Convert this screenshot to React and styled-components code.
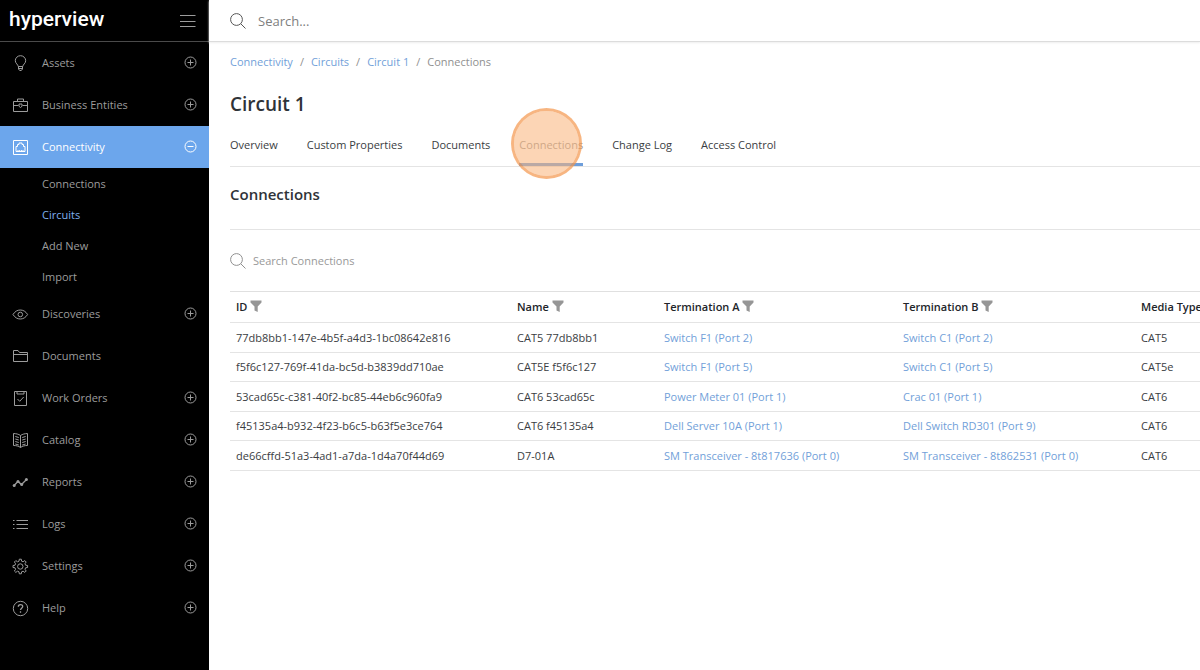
import React, { useState } from 'react';
import styled, { createGlobalStyle } from 'styled-components';

const GlobalStyle = createGlobalStyle`
  * {
    box-sizing: border-box;
  }
  body {
    margin: 0;
    background: #fff;
    color: #3a3d42;
    font-family: "Open Sans", "Noto Sans", sans-serif;
    font-size: 11px;
    line-height: 18px;
  }
  button, input {
    font: inherit;
    color: inherit;
    background: none;
    border: 0;
    padding: 0;
  }
  a {
    color: #729fd9;
    text-decoration: none;
  }
`;

const Layout = styled.div`
  display: grid;
  grid-template-columns: 209px minmax(0, 1fr);
  min-height: 100vh;
`;

const Sidebar = styled.aside`
  background: #000;
  color: #9c9c9c;
`;

const Brand = styled.div`
  display: flex;
  align-items: center;
  justify-content: space-between;
  height: 42px;
  padding: 0 13px 0 9px;
  border-bottom: 1px solid #4a4a4a;
`;

const Logo = styled.a`
  color: #fff;
  font-family: Roboto, sans-serif;
  font-size: 21px;
  font-weight: 500;
  line-height: 24px;
  padding-bottom: 3px;
`;

const IconButton = styled.button`
  display: flex;
  cursor: pointer;
`;

const Icon = styled.svg`
  display: block;
  flex: none;
  width: ${({ $size }) => $size || 16}px;
  height: ${({ $size }) => $size || 16}px;
  fill: none;
  stroke: currentColor;
  stroke-width: 1;
`;

const NavItem = styled.button`
  display: flex;
  align-items: center;
  width: 100%;
  height: 42px;
  padding: 0 12px;
  text-align: left;
  cursor: pointer;
  color: ${({ $active }) => ($active ? '#fff' : '#9c9c9c')};
  background: ${({ $active }) => ($active ? '#6ca6ec' : 'transparent')};
`;

const NavLabel = styled.span`
  flex: 1;
  padding-left: 13px;
`;

const SubNav = styled.nav`
  display: flex;
  flex-direction: column;
  padding-bottom: 1px;
`;

const SubLink = styled.a`
  padding-left: 42px;
  line-height: 31px;
  color: ${({ $active }) => ($active ? '#7fb0f0' : '#9c9c9c')};
`;

const TopBar = styled.header`
  display: flex;
  align-items: center;
  height: 42px;
  padding: 0 21px;
  gap: 12px;
  color: #555;
  border-bottom: 1px solid #dcdcdc;
  box-shadow: 0 1px 2px #eee;
`;

const SearchInput = styled.input`
  flex: 1;
  outline: none;
  font-size: ${({ $large }) => ($large ? 13 : 11)}px;
  &::placeholder {
    color: ${({ $large }) => ($large ? '#808080' : '#999')};
    opacity: 1;
  }
`;

const Content = styled.main`
  padding: 11px 0 0 21px;
  overflow: hidden;
`;

const Crumbs = styled.nav`
  display: flex;
  gap: 7px;
  color: #909090;
`;

const Title = styled.h1`
  margin: 18px 0 0;
  font-size: 19px;
  font-weight: 600;
  line-height: 30px;
  color: #2f3338;
`;

const Tabs = styled.div`
  display: flex;
  gap: 29px;
  margin-top: 15px;
  border-bottom: 1px solid #e4e4e4;
`;

const Tab = styled.button`
  position: relative;
  height: 32px;
  padding-bottom: 8px;
  cursor: pointer;
  color: ${({ $active }) => ($active ? '#999' : '#3a3d42')};
  border-bottom: 3px solid ${({ $active }) => ($active ? '#6e9edb' : 'transparent')};
`;

const ClickMarker = styled.span`
  position: absolute;
  top: 50%;
  left: 50%;
  width: 71px;
  height: 71px;
  margin: -41px 0 0 -40px;
  border-radius: 50%;
  border: 3px solid rgba(244, 150, 76, 0.7);
  background: rgba(250, 178, 120, 0.55);
  background-clip: padding-box;
  pointer-events: none;
`;

const SectionTitle = styled.h2`
  margin: 0;
  padding: 15px 0 22px;
  font-size: 15px;
  font-weight: 600;
  line-height: 25px;
  color: #2f3338;
  border-bottom: 1px solid #e4e4e4;
`;

const TableSearch = styled.label`
  display: flex;
  align-items: center;
  gap: 7px;
  height: 61px;
  color: #909090;
`;

const Table = styled.table`
  table-layout: fixed;
  width: 1144px;
  border-collapse: separate;
  border-spacing: 0;
  border-top: 1px solid #e0e0e0;
`;

const HeadCell = styled.th`
  width: ${({ $width }) => $width}px;
  height: 31px;
  padding: 0 6px;
  text-align: left;
  font-weight: 600;
  color: #22252a;
  border-bottom: 1px solid #e4e4e4;
`;

const HeadLabel = styled.span`
  display: flex;
  align-items: center;
  gap: 3px;
`;

const FilterButton = styled.button`
  display: flex;
  padding-bottom: 3px;
  color: #969696;
  cursor: pointer;
`;

const Row = styled.tr`
  height: 30px;
  &:nth-child(even) {
    height: 29px;
  }
`;

const Cell = styled.td`
  padding: 0 6px;
  white-space: nowrap;
  border-bottom: 1px solid #e4e4e4;
`;

const glyphs = {
  assets: (
    <>
      <path d="M6.200 11.500C6.200 9.500 3.300 8.500 3.300 5.700a5.200 5 0 0 1 10.400 0c0 2.800-2.900 3.800-2.900 5.800z" />
      <path d="M6.500 11.500v2.500l1.200 1.500h1.600l1.200-1.500v-2.500M6.500 13.500h4" />
    </>
  ),
  business: (
    <>
      <path d="M1.5 4.5h14v10h-14zM5.5 4.500v-2.500h6v2.500M1.500 8.500h5M10.500 8.500h5" />
      <path d="M7 7h3v2.300L8.500 10.500 7 9.300z" />
    </>
  ),
  connectivity: (
    <>
      <path d="M1.500 1.500h14v14h-14z" />
      <path d="M4 12.500V7.500h1.500v-2h1.500V4h3v1.500h1.500v2H13v5zM6 12.500v-1.500M7.700 12.500v-1.500M9.400 12.500v-1.500M11 12.500v-1.500" />
    </>
  ),
  discoveries: (
    <>
      <path d="M1 8.500c2-3.200 4.500-4.500 7.300-4.500s5.300 1.300 7.300 4.500c-2 3.200-4.500 4.500-7.300 4.500S3 11.700 1 8.500z" />
      <circle cx="8.300" cy="8.500" r="2.300" />
    </>
  ),
  documents: <path d="M1.500 13.500v-11h4.500l1.500 2h8v9zM1.500 6.500h14" />,
  orders: (
    <>
      <path d="M2.500 1.500h12v14h-12zM5 1.500v2.500h7V1.500" />
      <path d="M5.500 9l2.200 2.300 4-4.300" />
    </>
  ),
  catalog: (
    <>
      <path d="M8.500 3.500C6.500 2 4 1.700 1.500 1.500v12c2.500 0 5 .5 7 2 2-1.500 4.500-2 7-2v-12c-2.500.2-5 .5-7 2zv12" />
      <path d="M3.300 4.500l3.500 1M3.300 7l3.500 1M3.300 9.500l3.500 1M13.700 4.500l-3.500 1M13.700 7l-3.500 1M13.700 9.500l-3.500 1M3.300 12l3.500 1M13.700 12l-3.500 1" />
    </>
  ),
  reports: (
    <>
      <path d="M2 11.500l4-4 3.500 3L14.500 5.500" strokeWidth="1.300" />
      <g fill="currentColor" stroke="none">
        <circle cx="2.200" cy="11.500" r="1.500" />
        <circle cx="6" cy="7.500" r="1.500" />
        <circle cx="9.700" cy="10.500" r="1.500" />
        <circle cx="14.400" cy="5.500" r="1.500" />
      </g>
    </>
  ),
  logs: <path d="M4.500 4.500h11.500M4.500 8.500h11.500M4.500 12.500h11.500M1 4.500h1.500M1 8.500h1.500M1 12.500h1.500" />,
  settings: (
    <>
      <path d="M7.300 1.200h2l.3 2 1.500.6 1.700-1.200 1.400 1.400-1.200 1.700.6 1.500 2 .3v2l-2 .3-.6 1.500 1.200 1.700-1.400 1.400-1.700-1.200-1.500.6-.3 2h-2l-.3-2-1.500-.6-1.700 1.200-1.400-1.400 1.200-1.700-.6-1.500-2-.3v-2l2-.3.6-1.500-1.200-1.700 1.400-1.400 1.700 1.200 1.500-.6z" />
      <circle cx="8.300" cy="8.500" r="2.700" />
    </>
  ),
  help: (
    <>
      <circle cx="8.500" cy="8.500" r="7.200" />
      <path d="M6.300 6.700c0-2.800 4.400-2.800 4.400-.2 0 1.600-2.200 1.800-2.200 3.500M8.500 11.300v1.400" strokeWidth="1.300" />
    </>
  ),
};

const navItems = [
  { icon: 'assets', label: 'Assets', expandable: true },
  { icon: 'business', label: 'Business Entities', expandable: true },
  {
    icon: 'connectivity',
    label: 'Connectivity',
    expandable: true,
    children: ['Connections', 'Circuits', 'Add New', 'Import'],
  },
  { icon: 'discoveries', label: 'Discoveries', expandable: true },
  { icon: 'documents', label: 'Documents' },
  { icon: 'orders', label: 'Work Orders', expandable: true },
  { icon: 'catalog', label: 'Catalog', expandable: true },
  { icon: 'reports', label: 'Reports', expandable: true },
  { icon: 'logs', label: 'Logs', expandable: true },
  { icon: 'settings', label: 'Settings', expandable: true },
  { icon: 'help', label: 'Help', expandable: true },
];

const tabs = ['Overview', 'Custom Properties', 'Documents', 'Connections', 'Change Log', 'Access Control'];

const columns = [
  { label: 'ID', width: 281 },
  { label: 'Name', width: 147 },
  { label: 'Termination A', width: 239 },
  { label: 'Termination B', width: 238 },
  { label: 'Media Type', width: 239 },
];

const rows = [
  ['77db8bb1-147e-4b5f-a4d3-1bc08642e816', 'CAT5 77db8bb1', 'Switch F1 (Port 2)', 'Switch C1 (Port 2)', 'CAT5'],
  ['f5f6c127-769f-41da-bc5d-b3839dd710ae', 'CAT5E f5f6c127', 'Switch F1 (Port 5)', 'Switch C1 (Port 5)', 'CAT5e'],
  ['53cad65c-c381-40f2-bc85-44eb6c960fa9', 'CAT6 53cad65c', 'Power Meter 01 (Port 1)', 'Crac 01 (Port 1)', 'CAT6'],
  ['f45135a4-b932-4f23-b6c5-b63f5e3ce764', 'CAT6 f45135a4', 'Dell Server 10A (Port 1)', 'Dell Switch RD301 (Port 9)', 'CAT6'],
  ['de66cffd-51a3-4ad1-a7da-1d4a70f44d69', 'D7-01A', 'SM Transceiver - 8t817636 (Port 0)', 'SM Transceiver - 8t862531 (Port 0)', 'CAT6'],
];

const SearchIcon = () => (
  <Icon viewBox="0 0 16 16" aria-hidden="true">
    <circle cx="6.500" cy="6.500" r="5.900" />
    <path d="M10.800 10.800l4.700 4.700" />
  </Icon>
);

const ToggleIcon = ({ open }) => (
  <Icon viewBox="0 0 14 14" $size={14} aria-hidden="true">
    <circle cx="7.500" cy="6.500" r="5.500" />
    <path d={open ? 'M4.500 6.500h6' : 'M4.500 6.500h6M7.500 3.500v6'} />
  </Icon>
);

const App = () => {
  const [open, setOpen] = useState('Connectivity');
  const [activeTab, setActiveTab] = useState('Connections');

  return (
    <Layout>
      <GlobalStyle />
      <Sidebar>
        <Brand>
          <Logo href="#">hyperview</Logo>
          <IconButton aria-label="Toggle menu">
            <Icon viewBox="0 0 16 16">
              <path d="M0 2.500h15.500M0 8.500h15.500M0 13.500h15.500" />
            </Icon>
          </IconButton>
        </Brand>
        {navItems.map(item => (
          <React.Fragment key={item.label}>
            <NavItem
              $active={open === item.label}
              onClick={() => setOpen(open === item.label ? '' : item.label)}
            >
              <Icon viewBox="0 0 17 17" $size={17} aria-hidden="true">{glyphs[item.icon]}</Icon>
              <NavLabel>{item.label}</NavLabel>
              {item.expandable && <ToggleIcon open={open === item.label} />}
            </NavItem>
            {item.children && open === item.label && (
              <SubNav>
                {item.children.map(child => (
                  <SubLink key={child} href="#" $active={child === 'Circuits'}>{child}</SubLink>
                ))}
              </SubNav>
            )}
          </React.Fragment>
        ))}
      </Sidebar>
      <div>
        <TopBar>
          <SearchIcon />
          <SearchInput $large type="text" placeholder="Search..." aria-label="Search" />
        </TopBar>
        <Content>
          <Crumbs aria-label="Breadcrumb">
            <a href="#">Connectivity</a>
            <span>/</span>
            <a href="#">Circuits</a>
            <span>/</span>
            <a href="#">Circuit 1</a>
            <span>/</span>
            <span>Connections</span>
          </Crumbs>
          <Title>Circuit 1</Title>
          <Tabs role="tablist">
            {tabs.map(tab => (
              <Tab
                key={tab}
                role="tab"
                aria-selected={tab === activeTab}
                $active={tab === activeTab}
                onClick={() => setActiveTab(tab)}
              >
                {tab}
                {tab === activeTab && <ClickMarker />}
              </Tab>
            ))}
          </Tabs>
          <SectionTitle>Connections</SectionTitle>
          <TableSearch>
            <SearchIcon />
            <SearchInput type="text" placeholder="Search Connections" aria-label="Search Connections" />
          </TableSearch>
          <Table>
            <thead>
              <tr>
                {columns.map(col => (
                  <HeadCell key={col.label} $width={col.width}>
                    <HeadLabel>
                      {col.label}
                      <FilterButton aria-label={`Filter ${col.label}`}>
                        <Icon viewBox="0 0 12 12" $size={12}>
                          <path d="M.5.500h11v2L7.700 6.500v5.500L4.500 10.500v-4L.5 2.500z" fill="currentColor" stroke="none" />
                        </Icon>
                      </FilterButton>
                    </HeadLabel>
                  </HeadCell>
                ))}
              </tr>
            </thead>
            <tbody>
              {rows.map(([id, name, a, b, media]) => (
                <Row key={id}>
                  <Cell>{id}</Cell>
                  <Cell>{name}</Cell>
                  <Cell><a href="#">{a}</a></Cell>
                  <Cell><a href="#">{b}</a></Cell>
                  <Cell>{media}</Cell>
                </Row>
              ))}
            </tbody>
          </Table>
        </Content>
      </div>
    </Layout>
  );
};

export default App;
